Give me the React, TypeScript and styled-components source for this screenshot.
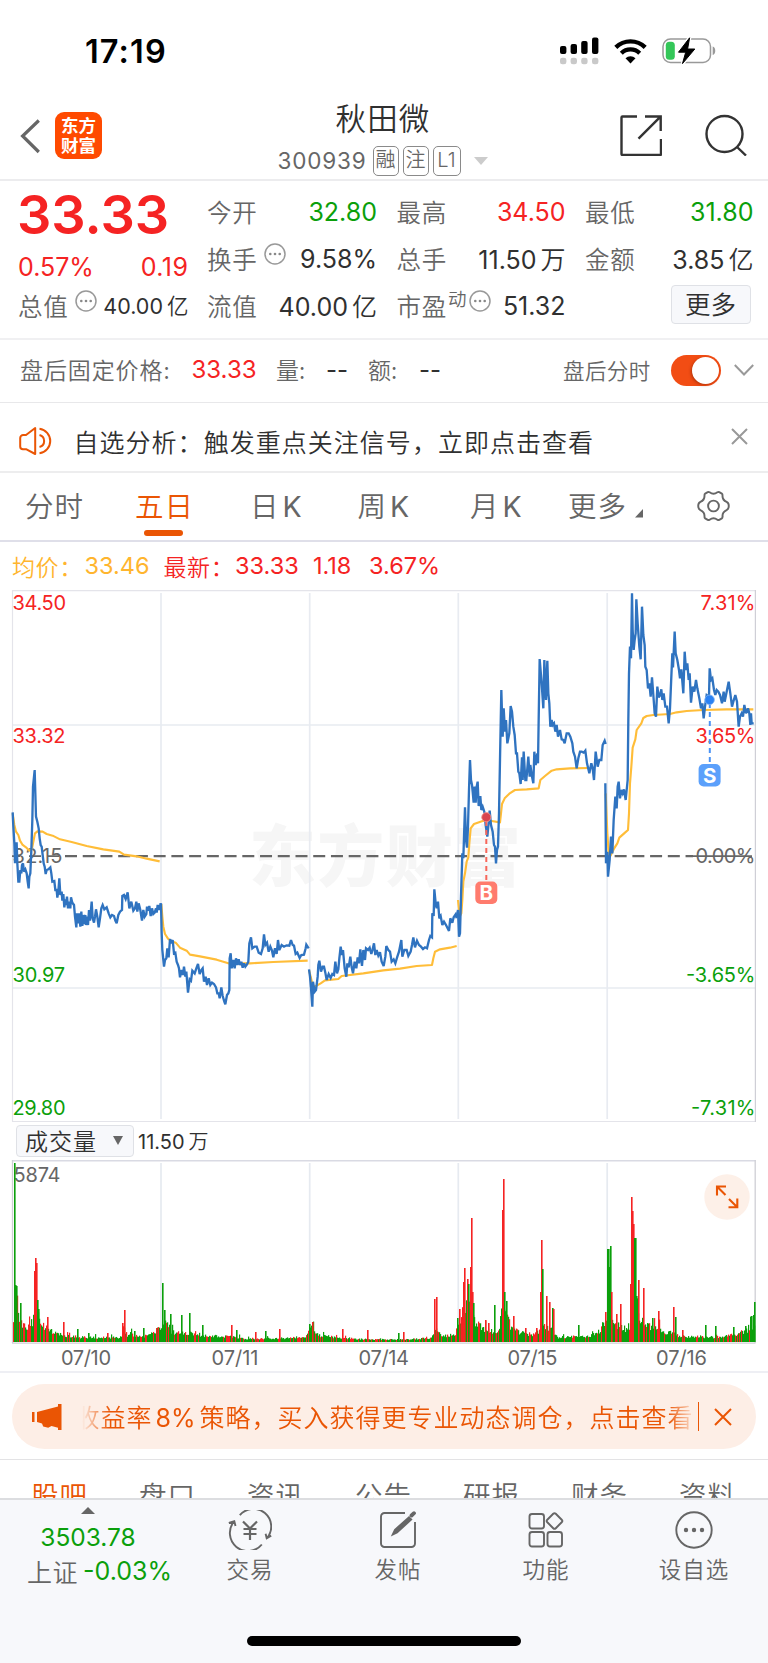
import React from "react";
import styled, { createGlobalStyle } from "styled-components";

const RED = "#f52323";
const GREEN = "#0b9f0b";
const ORANGE = "#ea5504";
const GREY = "#666";
const DARK = "#303030";

const GlobalStyle = createGlobalStyle`
  * { box-sizing: border-box; }
  body {
    margin: 0;
    background: #fff;
    font-family: Inter, "Noto Sans CJK SC", sans-serif;
    font-weight: 400;
    color: ${DARK};
  }
  svg { display: block; flex: none; }
`;

const Page = styled.div`
  width: 768px;
  height: 1663px;
  overflow: hidden;
  display: flex;
  flex-direction: column;
  background: #fff;
`;

const Txt = styled.span<{ $s: number; $c?: string; $ls?: number; $w?: number; $b?: number }>`
  font-size: ${(p) => p.$s}px;
  line-height: 1.2;
  color: ${(p) => p.$c ?? DARK};
  letter-spacing: ${(p) => p.$ls ?? 0}px;
  width: ${(p) => (p.$w ? `${p.$w}px` : "auto")};
  font-weight: ${(p) => p.$b ?? 400};
  white-space: nowrap;
  flex: none;
`;

/* CJK labels: lighter cut */
const Han = styled(Txt)`
  font-family: "Noto Sans CJK SC", sans-serif;
  font-weight: ${(p) => p.$b ?? 350};
`;

/* 万 / 亿 after a number */
const Unit = styled.span`
  font-family: "Noto Sans CJK SC", sans-serif;
  font-weight: 350;
  margin-left: 4px;
`;

/* Latin run inside CJK text */
const Latin = styled.span`
  font-family: Inter, sans-serif;
  font-weight: 400;
  letter-spacing: 0;
  margin: 0 4px 0 3px;
`;

const StatusBar = styled.header`
  height: 102px;
  flex: none;
  display: flex;
  align-items: center;
  justify-content: space-between;
  padding: 0 52px 0 85px;
`;
const StatusIcons = styled.div`
  display: flex;
  align-items: center;
  gap: 15px;
`;

const TitleBar = styled.div`
  height: 79px;
  flex: none;
  display: grid;
  grid-template-columns: 200px 1fr 202px;
  border-bottom: 2px solid #ececee;
`;
const TitleLeft = styled.div`
  display: flex;
  align-items: flex-start;
  padding: 10px 0 0 20px;
  gap: 15px;
`;
const Logo = styled.div`
  width: 47px;
  height: 47px;
  border-radius: 9px;
  background: #ff4a00;
  color: #fff;
  font: 700 17.5px/20px "Noto Sans CJK SC", sans-serif;
  display: flex;
  flex-direction: column;
  align-items: center;
  justify-content: center;
  padding-bottom: 1px;
`;
const TitleCenter = styled.div`
  display: flex;
  flex-direction: column;
  align-items: center;
`;
const TitleName = styled(Han)`
  margin-top: -3px;
`;
const CodeRow = styled.div`
  height: 30px;
  margin-top: 10px;
  display: flex;
  align-items: center;
`;
const Badge = styled.span<{ $w: number }>`
  width: ${(p) => p.$w}px;
  height: 30px;
  border: 1.5px solid #8a8a8a;
  border-radius: 5px;
  margin-right: 4px;
  color: ${GREY};
  font-size: 20px;
  font-weight: 350;
  line-height: 27px;
  text-align: center;
`;
const TitleRight = styled.div`
  display: flex;
  padding: 12px 0 0 54px;
  gap: 43px;
`;

const Quote = styled.section`
  height: 159px;
  flex: none;
  display: flex;
  padding: 0 14px 0 18px;
  border-bottom: 2px solid #f0f0f2;
`;
const QuoteMain = styled.div`
  width: 170.5px;
  margin-right: 18.5px;
`;
const BigPrice = styled(Txt)`
  margin-left: -1px;
`;
const QuoteGrid = styled.div`
  flex: 1;
  display: grid;
  grid-template-columns: 170px 169px 168.5px;
  grid-template-rows: 47px 47px 47px;
  column-gap: 19.5px;
  padding-top: 7px;
`;
const Spread = styled.div<{ $h?: number }>`
  display: flex;
  align-items: center;
  justify-content: space-between;
  height: ${(p) => (p.$h ? `${p.$h}px` : "auto")};
`;
const Lbl = styled.div`
  display: flex;
  align-items: center;
`;
const InfoWrap = styled.span<{ $gap: number }>`
  margin: -9px 0 0 ${(p) => p.$gap}px;
`;
const Sup = styled(Han)`
  margin: -15px 0 0 1px;
`;
const MoreButton = styled.button`
  width: 80px;
  height: 39px;
  margin: -2px 3px 0 auto;
  align-self: center;
  border: 1.5px solid #dfe1e6;
  border-radius: 4px;
  background: #f7f8fb;
  color: ${DARK};
  font: 350 25.5px/32px "Noto Sans CJK SC", sans-serif;
  padding: 0 0 3px;
`;

const AfterRow = styled.section`
  height: 63px;
  flex: none;
  display: flex;
  align-items: center;
  padding: 0 14px 2px 20px;
  border-bottom: 1.5px solid #e8e8ea;
`;
const Toggle = styled.span`
  width: 50px;
  height: 31px;
  border-radius: 16px;
  margin: 0 13px 0 auto;
  background: #f24d14;
  padding: 2px;
  display: flex;
  justify-content: flex-end;
  &::after {
    content: "";
    width: 27px;
    height: 27px;
    border-radius: 50%;
    background: #fff;
    box-shadow: -1px 1px 3px rgba(120, 30, 0, 0.5);
  }
`;

const Notice = styled.section`
  height: 70px;
  flex: none;
  display: flex;
  align-items: center;
  gap: 19.5px;
  padding: 8px 20px 0 19px;
  border-bottom: 2px solid #ededee;
`;
const CloseBox = styled.span`
  margin: -9px 0 0 auto;
`;

const Tabs = styled.nav`
  height: 69px;
  flex: none;
  display: flex;
  padding-left: 25px;
  border-bottom: 2px solid #dfdfe9;
`;
const Tab = styled.div<{ $w: number; $on?: boolean }>`
  width: ${(p) => p.$w}px;
  display: flex;
  flex-direction: column;
  padding-top: 12px;
  font: 350 28.5px/40px "Noto Sans CJK SC", sans-serif;
  letter-spacing: 1px;
  color: ${(p) => (p.$on ? ORANGE : GREY)};
  &::after {
    content: "";
    display: ${(p) => (p.$on ? "block" : "none")};
    width: 39px;
    height: 6px;
    border-radius: 3px;
    background: ${ORANGE};
    margin: 5px 0 0 9px;
  }
`;
const TabMore = styled.span`
  display: flex;
  align-items: flex-end;
  gap: 8px;
`;
const GearBox = styled.span`
  margin: 2px 0 0 1px;
`;

const AvgRow = styled.div`
  height: 48px;
  flex: none;
  display: flex;
  align-items: center;
  padding: 1px 0 0 12px;
`;

const VolumeHead = styled.div`
  height: 38px;
  flex: none;
  display: flex;
  align-items: center;
  padding: 0 0 0 16px;
  gap: 4px;
`;
const Selector = styled.button`
  width: 118px;
  height: 32px;
  padding: 0 10px 1px 8px;
  display: flex;
  align-items: center;
  justify-content: space-between;
  background: #f7f8fb;
  border: 1.5px solid #dfe1e6;
  border-radius: 4px;
`;

const BannerWrap = styled.section`
  height: 89px;
  flex: none;
  padding: 11px 12px 0;
  border-top: 2px solid #eeeff4;
  border-bottom: 1.5px solid #e3e3e5;
`;
const Banner = styled.div`
  height: 65px;
  border-radius: 33px;
  background: #fdeee6;
  display: flex;
  align-items: center;
  padding: 0 24px 0 20px;
`;
const Marquee = styled.div`
  width: 614px;
  margin-left: 20px;
  overflow: hidden;
  mask-image: linear-gradient(90deg, transparent 0, #000 28px, #000 586px, transparent 614px);
`;
const MarqueeText = styled(Han)`
  display: block;
  line-height: 38px;
  margin-left: -7.5px;
`;
const Bar = styled.span`
  width: 1.5px;
  height: 29px;
  background: ${ORANGE};
  margin: 0 15px 0 6px;
`;

const SubTabs = styled.div`
  height: 38px;
  flex: none;
  overflow: hidden;
  display: flex;
  padding: 18px 0 0 31px;
`;

const Dock = styled.footer`
  height: 165px;
  flex: none;
  border-top: 2px solid #dcdde0;
  background: #f7f8fb;
  display: flex;
  flex-direction: column;
  justify-content: space-between;
  align-items: center;
  padding-bottom: 17px;
`;
const DockRow = styled.div`
  width: 768px;
  display: flex;
`;
const IndexCell = styled.div`
  width: 176px;
  display: flex;
  flex-direction: column;
  align-items: center;
  padding-top: 7px;
`;
const DockCell = styled.div`
  width: 148px;
  display: flex;
  flex-direction: column;
  align-items: center;
  padding-top: 10px;
  gap: 5px;
`;
const IndexLine = styled.div`
  display: flex;
  align-items: center;
  margin: 4px 0 0 23px;
`;
const IndexValue = styled(Txt)`
  margin-top: 9px;
`;
const HomeBar = styled.div`
  width: 274px;
  height: 10px;
  border-radius: 5px;
  background: #000;
`;

const InfoDots = ({ gap = 6 }: { gap?: number }) => (
  <InfoWrap $gap={gap}>
    <svg width="22" height="22" viewBox="0 0 22 22" fill="none">
      <circle cx="11" cy="11" r="10" stroke="#999" strokeWidth="1.5" />
      <g fill="#888">
        <circle cx="6.3" cy="11" r="1.3" />
        <circle cx="11" cy="11" r="1.3" />
        <circle cx="15.7" cy="11" r="1.3" />
      </g>
    </svg>
  </InfoWrap>
);

const Cross = ({ size, color, sw }: { size: number; color: string; sw: number }) => (
  <svg width={size} height={size} viewBox={`0 0 ${size} ${size}`}>
    <path d={`M1 1L${size - 1} ${size - 1}M${size - 1} 1L1 ${size - 1}`} stroke={color} strokeWidth={sw} />
  </svg>
);

/* ---------- price chart ---------- */
/* Each trace is in thirds of a pixel, from its own segment's origin. */
const traces: { ox: number; price: string; avg: string }[] = [
  {
    ox: 0,
    avg: "38,700 43,735 48,755 55,765 60,782 68,795 78,802 88,812 96,806 101,780 105,760 112,754 128,755 140,762 158,767 180,778 215,786 260,798 310,808 358,815 372,824 410,829 440,836 479,844",
    price:
      "38,697 40,740 43,790 45,850 47,790 50,790 52,850 55,905 58,905 61,870 64,880 66,855 69,850 72,875 76,868 80,880 83,905 86,925 88,890 91,880 94,810 97,720 99,620 101,600 104,570 106,640 108,710 112,725 116,745 119,775 122,795 125,800 128,825 131,850 134,860 137,882 140,870 145,868 151,862 154,880 157,905 163,903 166,930 170,930 172,953 175,935 178,895 181,945 185,935 187,962 190,942 193,982 196,958 198,975 201,950 204,985 206,965 211,985 213,952 217,968 222,975 225,1010 229,1042 231,1000 235,1030 238,1000 241,1040 244,995 247,1038 250,1005 253,1032 256,1005 258,1035 261,1010 264,1035 267,990 270,1022 275,965 278,1015 282,1028 285,1010 288,988 292,1010 296,1042 300,1015 304,985 308,975 313,988 320,982 326,1000 331,1012 336,1005 342,1008 346,1022 350,1030 355,1005 360,995 366,990 367,948 372,945 377,957 383,937 388,985 394,965 400,992 405,985 409,965 412,995 416,970 421,990 426,1022 430,990 434,1010 439,1002 441,980 445,992 448,978 452,1008 456,985 460,1002 464,998 468,985 470,998 473,975 478,990 482,970",
  },
  {
    ox: 0,
    avg: "484,972 487,1010 490,1040 495,1062 504,1076 515,1084 527,1088 540,1103 560,1112 570,1124 600,1129 650,1139 685,1150 750,1150 820,1146 923,1142",
    price:
      "483,970 485,1060 487,1110 492,1160 495,1140 499,1135 502,1105 506,1132 510,1077 514,1090 518,1080 522,1120 526,1118 530,1145 534,1155 537,1165 540,1192 545,1170 549,1185 552,1160 556,1190 559,1175 564,1238 569,1198 573,1202 577,1172 584,1180 589,1165 594,1152 599,1182 604,1170 608,1165 612,1205 617,1190 621,1215 626,1195 631,1215 636,1208 642,1212 648,1222 652,1240 656,1240 659,1255 664,1222 668,1248 673,1265 676,1273 681,1245 685,1240 688,1230 689,1135 692,1120 695,1165 700,1140 704,1165 708,1135 712,1155 716,1138 720,1155 724,1145 728,1163 732,1150 736,1160 741,1153 745,1145 748,1090 753,1072 757,1105 764,1100 770,1100 776,1118 783,1122 788,1105 792,1063 796,1095 801,1088 806,1115 811,1100 816,1112 820,1132 825,1105 830,1122 834,1080 838,1110 845,1095 852,1100 860,1096 868,1097 873,1080 878,1095 882,1097 887,1122 892,1118 899,1134 904,1125 912,1124 917,1105 919,1094 926,1105",
  },
  {
    ox: 300,
    avg: "27,1170 32,1190 39,1220 50,1217 62,1210 75,1201 115,1197 125,1188 190,1180 250,1171 300,1166 350,1158 396,1155 400,1135 405,1115 420,1108 450,1103 470,1098",
    price:
      "27,1168 30,1190 33,1225 37,1280 39,1205 44,1235 48,1230 53,1190 55,1155 58,1142 63,1175 68,1160 72,1160 76,1178 80,1200 86,1182 92,1194 97,1182 102,1185 106,1145 111,1180 115,1168 118,1135 122,1100 126,1125 129,1110 134,1165 139,1190 142,1150 146,1162 151,1130 155,1162 159,1180 164,1145 169,1165 173,1132 177,1150 181,1108 186,1158 190,1110 195,1140 198,1105 204,1110 209,1103 214,1122 218,1108 222,1090 226,1125 230,1110 235,1127 240,1117 245,1145 251,1158 256,1130 259,1098 265,1110 270,1115 275,1145 281,1138 286,1150 292,1130 297,1115 304,1080 307,1130 313,1110 320,1110 325,1128 332,1115 336,1095 340,1072 345,1102 351,1082 357,1095 363,1100 369,1107 375,1102 381,1105 387,1080 391,1068 396,1072 397,1000 401,1008 403,928 407,970 410,985 414,965 418,1015 422,1008 427,1035 432,1025 438,1035 447,1053 451,1015 457,1028 461,1012 467,1003 470,1015",
  },
  {
    ox: 300,
    avg: "474,960 479,1010 484,1000 487,960 490,905 495,880 500,845 505,832 508,790 512,745 522,732 550,722 575,723 600,727 603,700 606,672 614,655 628,641 645,630 680,628 716,625 721,600 735,588 755,572 770,568 810,565 868,564",
    price:
      "470,1012 474,990 477,1070 480,1060 483,950 487,820 490,835 493,740 495,682 498,780 501,803 504,740 507,630 510,540 513,600 516,615 518,635 521,668 524,620 527,668 530,620 533,605 536,678 541,648 544,690 548,680 553,695 557,735 562,770 567,715 569,692 573,735 578,755 582,795 585,800 588,850 591,810 594,800 597,700 600,540 604,330 608,470 611,385 615,455 618,420 622,490 628,460 632,378 636,395 640,440 644,465 648,520 651,520 655,575 658,580 662,612 666,532 668,600 671,515 676,600 679,600 685,530 689,590 691,555 696,590 700,610 703,515 707,555 712,520 714,550 716,420 719,237 725,310 730,385 733,240 738,360 742,242 745,340 748,370 751,440 755,420 758,435 762,430 766,455 770,435 774,470 780,450 785,478 790,480 794,490 800,460 806,460 811,470 817,490 820,515 825,530 830,565 835,535 840,515 845,515 851,518 856,512 861,550 868,580 874,550 878,565 882,600 887,515 893,560 898,540 904,540 908,495 914,482 917,492",
  },
  {
    ox: 520,
    avg: "257,640 262,760 266,820 271,828 282,806 292,790 298,773 315,758 324,750 327,700 330,610 334,560 338,503 346,478 350,450 364,430 370,414 380,408 400,405 450,402 470,397 500,393 550,390 620,388 700,388",
    price:
      "256,610 258,850 262,815 264,890 269,840 273,770 277,820 281,720 286,650 290,685 293,620 296,605 300,655 304,630 308,640 312,628 317,660 320,630 323,600 325,420 327,280 330,200 333,235 336,40 338,150 341,210 344,180 347,160 349,58 353,130 358,200 362,238 366,80 370,165 374,195 376,260 380,270 384,325 388,310 392,350 396,292 400,345 404,400 408,410 412,320 416,352 420,345 424,328 427,360 431,340 436,380 441,380 446,430 450,385 454,290 457,220 459,262 464,155 467,220 472,240 477,270 480,295 484,268 490,340 494,215 498,270 502,250 506,300 509,280 513,368 518,320 523,335 528,300 532,325 538,355 543,385 547,370 551,415 555,380 560,345 567,350 569,265 573,300 577,295 582,330 586,345 590,330 595,335 600,345 606,370 611,335 614,365 620,335 626,305 631,340 636,380 640,365 646,345 651,365 656,440 660,410 665,400 669,410 673,375 678,400 684,385 688,400 691,435 693,400 695,430 701,430",
  },
];

const AxisText = ({ x, y, w, fill, end, children }: { x: number; y: number; w: number; fill: string; end?: boolean; children: string }) => (
  <text x={end ? x - w : x} y={y} fontSize="20" fill={fill} textLength={w} fontFamily="Inter, sans-serif">
    {children}
  </text>
);

const PriceChart = () => (
  <svg width="768" height="532" viewBox="0 590 768 532" fill="none">
    <text x="249" y="881" fontSize="67" fontWeight="900" fill="#f6f6f6" textLength="272" fontFamily="'Noto Sans CJK SC', sans-serif">
      东方财富
    </text>
    <g stroke="#e8ebf1" strokeWidth="1.7">
      <path d="M161 593V1119M309.7 593V1119M458.3 593V1119M607.2 593V1119" />
      <path d="M13 725H755M13 988H755" />
    </g>
    <path d="M12 590.7H755.5M12.5 590V1121.5M12 1121.5H755.5" stroke="#e4e4ea" strokeWidth="1.2" />
    <path d="M755.4 590V1122" stroke="#cfcfd6" strokeWidth="1.2" />
    <AxisText x={12.5} y={863} w={50} fill={GREY}>32.15</AxisText>
    <AxisText x={755.5} y={863} w={60} fill={GREY} end>0.00%</AxisText>
    <path d="M12 856.2H20M29 856.2H41M47 856.2H59M693 856.2H752" stroke="#666" strokeWidth="1.8" />
    <path d="M65 856.2H693" stroke="#666" strokeWidth="2.3" strokeDasharray="12 5.73" />
    {traces.map((t, i) => (
      <g key={i} transform={`translate(${t.ox} 580) scale(0.33333)`} strokeLinejoin="round">
        <polyline points={t.avg} stroke="#ffbd38" strokeWidth="6.4" />
        <polyline points={t.price} stroke="#2f73c0" strokeWidth="7" strokeLinejoin="miter" strokeMiterlimit="3" />
      </g>
    ))}
    <AxisText x={12.5} y={610} w={53.5} fill={RED}>34.50</AxisText>
    <AxisText x={12.5} y={743} w={53} fill={RED}>33.32</AxisText>
    <AxisText x={12.5} y={982} w={52.5} fill={GREEN}>30.97</AxisText>
    <AxisText x={12.5} y={1114.7} w={53} fill={GREEN}>29.80</AxisText>
    <AxisText x={755.5} y={610} w={55} fill={RED} end>7.31%</AxisText>
    <AxisText x={755.5} y={743} w={60} fill={RED} end>3.65%</AxisText>
    <AxisText x={755.5} y={982} w={69.5} fill={GREEN} end>-3.65%</AxisText>
    <AxisText x={755.5} y={1114.7} w={64.5} fill={GREEN} end>-7.31%</AxisText>
    <path d="M486.3 821V882" stroke="#f7665a" strokeWidth="2" strokeDasharray="5 4" />
    <circle cx="486.3" cy="817.2" r="4.6" fill="#d94550" stroke="#f49a90" strokeWidth="0.8" />
    <rect x="475.3" y="881.5" width="22" height="22.5" rx="5" fill="#ff7b6d" />
    <text x="486.3" y="900" fontSize="20.5" fontWeight="700" fill="#fff" textAnchor="middle" fontFamily="Inter, sans-serif">B</text>
    <path d="M709.8 703V765" stroke="#4a93f5" strokeWidth="2" strokeDasharray="5 4" />
    <circle cx="709.6" cy="699.8" r="4.8" fill="#2b82f3" stroke="#86b7f6" strokeWidth="0.8" />
    <rect x="698.6" y="764" width="22" height="22.5" rx="5" fill="#5ba0fb" />
    <text x="709.7" y="782.5" fontSize="20.5" fontWeight="700" fill="#fff" textAnchor="middle" fontFamily="Inter, sans-serif">S</text>
  </svg>
);

/* ---------- volume chart ---------- */
/* Typical bar height by x position. */
const envelope: [number, number][] = [
  [13, 26], [17, 30], [23, 18], [29, 17], [34, 26], [38, 32], [42, 13], [55, 11], [62, 7], [80, 5], [110, 4.5], [121, 5], [124, 14], [127, 7],
  [131, 9], [135, 5], [150, 7], [161, 15], [167, 20], [171, 10], [190, 10], [200, 6], [225, 6], [245, 3.5], [290, 4], [305, 6], [311, 15], [318, 7],
  [335, 5], [360, 3], [400, 2.5], [430, 4], [437, 13], [442, 6], [455, 8], [463, 36], [470, 34], [475, 20], [485, 12], [498, 10], [501, 36], [505, 32],
  [510, 17], [520, 9], [538, 8], [542, 18], [552, 12], [558, 5], [590, 6], [602, 14], [607, 30], [612, 22], [620, 15], [630, 11], [632, 47], [636, 48],
  [640, 22], [655, 14], [668, 10], [674, 9], [678, 6], [720, 5], [735, 8], [748, 12], [755, 20],
];
const spikes: [number, number, "r" | "g"][] = [
  [14, 179, "g"], [15, 57, "g"], [16, 56, "g"], [20, 39, "g"], [34, 71, "r"], [35, 84, "r"], [36, 79, "r"], [37, 42, "g"], [38, 33, "g"], [47, 25, "r"],
  [63, 20, "r"], [77, 13, "g"], [88, 9, "g"], [107, 9, "r"], [122, 19, "r"], [124, 32, "r"], [134, 11, "g"], [143, 14, "g"], [156, 14, "r"], [162, 59, "g"],
  [164, 32, "g"], [170, 28, "g"], [181, 27, "g"], [189, 29, "g"], [202, 17, "g"], [231, 17, "r"], [236, 12, "g"], [255, 10, "r"], [265, 11, "g"],
  [279, 13, "r"], [309, 18, "g"], [312, 20, "r"], [342, 13, "r"], [367, 12, "r"], [398, 9, "g"], [403, 10, "r"], [434, 43, "r"], [436, 45, "r"],
  [457, 24, "g"], [459, 33, "r"], [463, 60, "r"], [464, 74, "r"], [467, 63, "r"], [468, 58, "g"], [470, 75, "r"], [471, 124, "r"], [472, 50, "r"],
  [473, 39, "g"], [485, 22, "r"], [488, 19, "r"], [494, 37, "g"], [502, 132, "r"], [503, 163, "r"], [504, 50, "g"], [506, 41, "g"], [513, 26, "r"],
  [525, 14, "r"], [536, 14, "r"], [540, 50, "r"], [541, 102, "r"], [542, 73, "g"], [546, 46, "r"], [549, 40, "r"], [552, 34, "g"], [553, 33, "r"],
  [578, 17, "g"], [605, 30, "r"], [607, 93, "g"], [608, 93, "g"], [609, 75, "g"], [610, 96, "g"], [611, 50, "r"], [616, 28, "r"], [620, 38, "r"],
  [630, 58, "r"], [631, 145, "r"], [632, 131, "r"], [633, 118, "r"], [634, 104, "g"], [635, 104, "g"], [636, 46, "g"], [638, 62, "r"], [643, 54, "r"],
  [652, 24, "g"], [658, 31, "r"], [673, 35, "r"], [675, 25, "g"], [682, 12, "r"], [705, 17, "g"], [715, 16, "g"], [733, 15, "g"], [745, 16, "g"],
  [751, 26, "g"], [753, 27, "g"], [754, 40, "g"],
];

const bars = (() => {
  const out: { x: number; h: number; red: boolean }[] = [];
  let seed = 77;
  const rnd = () => {
    seed = (seed * 16807) % 2147483647;
    return seed / 2147483647;
  };
  let k = 0;
  for (let x = 13; x < 755; x++) {
    while (k < envelope.length - 2 && envelope[k + 1][0] <= x) k++;
    const [x0, h0] = envelope[k];
    const [x1, h1] = envelope[k + 1];
    const base = h0 + ((h1 - h0) * (x - x0)) / (x1 - x0);
    const burst = rnd() > 0.93 ? 1.5 : 1;
    out.push({ x, h: Math.max(1.5, base * (0.7 + rnd() * 0.5) * burst), red: rnd() < 0.28 });
  }
  return out;
})();

const VolumeChart = () => (
  <svg width="768" height="211" viewBox="0 1160 768 211" fill="none" fontFamily="Inter, sans-serif">
    <path d="M161 1163V1342M309.7 1163V1342M458.3 1163V1342M607.2 1163V1342" stroke="#e6eaf0" strokeWidth="1.7" />
    <path d="M12 1160.5H755.5" stroke="#d9dae3" strokeWidth="1.8" />
    <path d="M12.5 1160V1343M12 1343.2H755.5M755.2 1160V1343" stroke="#cfcfd5" strokeWidth="1.3" />
    <AxisText x={13.5} y={1182} w={47} fill={GREY}>5874</AxisText>
    <g>
      {bars.map((b) => (
        <rect key={b.x} x={b.x} y={1342 - b.h} width="1.2" height={b.h} fill={b.red ? RED : GREEN} />
      ))}
      {spikes.map(([x, h, c]) => (
        <rect key={`s${x}`} x={x} y={1342 - h} width="1.6" height={h} fill={c === "r" ? RED : GREEN} />
      ))}
    </g>
    <circle cx="727" cy="1197" r="22.7" fill="#fdf0e8" />
    <path d="M717 1195.5V1186.5H726M717.5 1187L725.5 1195M729 1199L737 1207M728.5 1207.3H737.3V1198.5" stroke={ORANGE} strokeWidth="2.1" />
    <AxisText x={61} y={1365} w={50} fill={GREY}>07/10</AxisText>
    <AxisText x={211.5} y={1365} w={47} fill={GREY}>07/11</AxisText>
    <AxisText x={358.5} y={1365} w={50.5} fill={GREY}>07/14</AxisText>
    <AxisText x={507.5} y={1365} w={50} fill={GREY}>07/15</AxisText>
    <AxisText x={656} y={1365} w={51} fill={GREY}>07/16</AxisText>
  </svg>
);

const subTabs = ["股吧", "盘口", "资讯", "公告", "研报", "财务", "资料"];

const QLabel = ({ children }: { children: string }) => (
  <Han $s={24.5} $c={GREY} $ls={0.8}>{children}</Han>
);

export default function App() {
  return (
    <Page>
      <GlobalStyle />
      <StatusBar>
        <Txt $s={32.5} $b={600} $c="#000" $ls={1.1}>17:19</Txt>
        <StatusIcons>
          <svg width="39" height="28" viewBox="0 0 39 28">
            <g fill="#000">
              <rect x="0" y="9" width="6.4" height="8" rx="2" />
              <rect x="10.6" y="7" width="6.4" height="10" rx="2" />
              <rect x="21.2" y="4" width="6.4" height="13" rx="2" />
              <rect x="32" y="0.5" width="6.4" height="16.5" rx="2" />
            </g>
            <g fill="#c9c9c9">
              <rect x="0" y="20.7" width="6.4" height="6.6" rx="2.4" />
              <rect x="10.6" y="20.7" width="6.4" height="6.6" rx="2.4" />
              <rect x="21.2" y="20.7" width="6.4" height="6.6" rx="2.4" />
              <rect x="32" y="20.7" width="6.4" height="6.6" rx="2.4" />
            </g>
          </svg>
          <svg width="33" height="25" viewBox="0 0 33 25" fill="none">
            <path d="M1.8 8.4a21 21 0 0 1 29.4 0" stroke="#000" strokeWidth="4.3" />
            <path d="M7.3 14.2a13 13 0 0 1 18.4 0" stroke="#000" strokeWidth="4.2" />
            <path d="M16.5 24.5l-5-5.2a7.4 7.4 0 0 1 10 0z" fill="#000" />
          </svg>
          <svg width="54" height="28" viewBox="0 0 54 28" fill="none">
            <rect x="1" y="2" width="47.5" height="23.5" rx="7.5" stroke="#999" strokeWidth="1.5" />
            <path d="M50.7 9.5c3.4 1 3.4 7.5 0 8.5z" fill="#999" />
            <rect x="3.8" y="4.7" width="9" height="18" rx="3.5" fill="#34c759" />
            <path d="M27.6.8 16.5 15.2h7.2L20.5 26.6 32.8 12h-7.2z" fill="#000" stroke="#fff" strokeWidth="3.5" />
            <path d="M27.6.8 16.5 15.2h7.2L20.5 26.6 32.8 12h-7.2z" fill="#000" stroke="#000" strokeWidth="1" strokeLinejoin="round" />
          </svg>
        </StatusIcons>
      </StatusBar>

      <TitleBar>
        <TitleLeft>
          <svg width="20" height="47" viewBox="20 112 20 47" fill="none">
            <path d="M38.8 120.5 22.6 136 38.8 152" stroke="#666" strokeWidth="3.2" />
          </svg>
          <Logo>
            <span>东方</span>
            <span>财富</span>
          </Logo>
        </TitleLeft>
        <TitleCenter>
          <TitleName $s={30.5} $ls={1.2}>秋田微</TitleName>
          <CodeRow>
            <Txt $s={22.5} $c={GREY} $ls={0.8} $w={95}>300939</Txt>
            <Badge $w={26}>融</Badge>
            <Badge $w={26}>注</Badge>
            <Badge $w={28}>L1</Badge>
            <svg width="24" height="8" viewBox="-9 0 24 8"><path d="M0 0h14L7 8z" fill="#ccc" /></svg>
          </CodeRow>
        </TitleCenter>
        <TitleRight>
          <svg width="42" height="42" viewBox="620 114 42 42" fill="none" stroke="#333" strokeWidth="2.4">
            <path d="M637 116.5h-14.5a1 1 0 0 0-1 1V154a1 1 0 0 0 1 1h37.5a1 1 0 0 0 1-1v-15M645 116.5h15.7V131M660.5 116.7l-22 22" />
          </svg>
          <svg width="42" height="42" viewBox="704 114 42 42" fill="none" stroke="#333" strokeWidth="2.4">
            <circle cx="723.5" cy="134" r="18" />
            <path d="M736 147l9 8.5" />
          </svg>
        </TitleRight>
      </TitleBar>

      <Quote>
        <QuoteMain>
          <Spread $h={68}><BigPrice $s={54} $b={600} $c={RED}>33.33</BigPrice></Spread>
          <Spread $h={35}>
            <Txt $s={25} $c={RED}>0.57%</Txt>
            <Txt $s={25} $c={RED} $ls={0.5}>0.19</Txt>
          </Spread>
          <Spread $h={43}>
            <Lbl><QLabel>总值</QLabel><InfoDots /></Lbl>
            <Txt $s={21.5}>40.00<Unit>亿</Unit></Txt>
          </Spread>
        </QuoteMain>
        <QuoteGrid>
          <Spread><QLabel>今开</QLabel><Txt $s={25} $c={GREEN}>32.80</Txt></Spread>
          <Spread><QLabel>最高</QLabel><Txt $s={25} $c={RED}>34.50</Txt></Spread>
          <Spread><QLabel>最低</QLabel><Txt $s={25} $c={GREEN}>31.80</Txt></Spread>
          <Spread><Lbl><QLabel>换手</QLabel><InfoDots /></Lbl><Txt $s={25}>9.58%</Txt></Spread>
          <Spread><QLabel>总手</QLabel><Txt $s={25}>11.50<Unit>万</Unit></Txt></Spread>
          <Spread><QLabel>金额</QLabel><Txt $s={25}>3.85<Unit>亿</Unit></Txt></Spread>
          <Spread><QLabel>流值</QLabel><Txt $s={25}>40.00<Unit>亿</Unit></Txt></Spread>
          <Spread>
            <Lbl><QLabel>市盈</QLabel><Sup $s={18.5} $c={GREY}>动</Sup><InfoDots gap={2} /></Lbl>
            <Txt $s={25}>51.32</Txt>
          </Spread>
          <MoreButton>更多</MoreButton>
        </QuoteGrid>
      </Quote>

      <AfterRow>
        <Han $s={23} $c={GREY} $ls={0.9} $w={171.5}>盘后固定价格:</Han>
        <Txt $s={24} $c={RED} $w={84.5}>33.33</Txt>
        <Han $s={23} $c={GREY} $w={50}>量:</Han>
        <Txt $s={24} $w={42}>--</Txt>
        <Han $s={23} $c={GREY} $w={51}>额:</Han>
        <Txt $s={24} $w={144}>--</Txt>
        <Han $s={21.5} $c={GREY} $ls={0.4}>盘后分时</Han>
        <Toggle />
        <svg width="20" height="12" viewBox="0 0 20 12" fill="none"><path d="M.8 1 10 10.5 19.2 1" stroke="#999" strokeWidth="2" /></svg>
      </AfterRow>

      <Notice>
        <svg width="35" height="30" viewBox="0 0 35 30" fill="none" stroke={ORANGE} strokeWidth="2">
          <path d="M16.2 2v26L7.5 23.3H4A2.8 2.8 0 0 1 1.2 20.5v-8.5A3 3 0 0 1 4.2 9H7z" strokeLinejoin="round" />
          <path d="M20.5 2.8a12.3 12.3 0 0 1 0 24.4M20.5 9a6.2 6.2 0 0 1 0 12" />
        </svg>
        <Han $s={25} $ls={1.03}>自选分析：触发重点关注信号，立即点击查看</Han>
        <CloseBox><Cross size={17} color="#999" sw={2} /></CloseBox>
      </Notice>

      <Tabs>
        <Tab $w={110}>分时</Tab>
        <Tab $w={115} $on>五日</Tab>
        <Tab $w={107.5}><span>日<Latin>K</Latin></span></Tab>
        <Tab $w={112.5}><span>周<Latin>K</Latin></span></Tab>
        <Tab $w={98}><span>月<Latin>K</Latin></span></Tab>
        <Tab $w={128}>
          <TabMore>
            更多
            <svg width="8" height="16" viewBox="0 0 8 16"><path d="M8 0v8.5H0z" fill="#666" /></svg>
          </TabMore>
        </Tab>
        <Tab $w={34}>
          <GearBox>
            <svg width="33" height="36" viewBox="0 0 33 36" fill="none" stroke="#666" strokeWidth="1.9">
              <path d="M12.6 5.3Q16.5 8.2 20.4 5.3Q21.3 4.7 22.3 5.1L24.8 6.6Q25.6 7.2 25.5 8.3Q25.2 13 29.6 14.9Q31.8 15.9 31.8 19Q31.8 22.1 29.6 23.1Q25.2 25 25.5 29.7Q25.6 30.8 24.8 31.4L22.3 32.9Q21.3 33.3 20.4 32.7Q16.5 29.8 12.6 32.7Q11.7 33.3 10.7 32.9L8.2 31.4Q7.4 30.8 7.5 29.7Q7.8 25 3.4 23.1Q1.2 22.1 1.2 19Q1.2 15.9 3.4 14.9Q7.8 13 7.5 8.3Q7.4 7.2 8.2 6.6L10.7 5.1Q11.7 4.7 12.6 5.3Z" />
              <circle cx="16.5" cy="19" r="5.4" />
            </svg>
          </GearBox>
        </Tab>
      </Tabs>

      <AvgRow>
        <Han $s={23} $c="#ffb52e" $ls={0.6} $w={72.5}>均价：</Han>
        <Txt $s={23.5} $c="#ffb52e" $w={79}>33.46</Txt>
        <Han $s={23} $c={RED} $ls={0.6} $w={71.5}>最新：</Han>
        <Txt $s={23.5} $c={RED} $w={78}>33.33</Txt>
        <Txt $s={23.5} $c={RED} $w={56}>1.18</Txt>
        <Txt $s={23.5} $c={RED}>3.67%</Txt>
      </AvgRow>

      <PriceChart />

      <VolumeHead>
        <Selector>
          <Han $s={23} $ls={1}>成交量</Han>
          <svg width="10" height="9" viewBox="0 0 10 9"><path d="M0 0h10L5 9z" fill="#666" /></svg>
        </Selector>
        <Txt $s={20}>11.50<Unit>万</Unit></Txt>
      </VolumeHead>
      <VolumeChart />

      <BannerWrap>
        <Banner>
          <svg width="30" height="26" viewBox="0 0 30 26" fill={ORANGE}>
            <path d="M0 8h2.5v10H0zM5 8 26 2.5V0h3.5v26H26v-2.2L19.5 22l-3.3 1.7-5-1.3L10 19.5 5 18z" />
          </svg>
          <Marquee>
            <MarqueeText $s={25} $ls={1} $c={ORANGE}>收益率<Latin>8%</Latin>策略，买入获得更专业动态调仓，点击查看</MarqueeText>
          </Marquee>
          <Bar />
          <Cross size={18} color={ORANGE} sw={2} />
        </Banner>
      </BannerWrap>

      <SubTabs>
        {subTabs.map((t, i) => (
          <Han key={t} $s={27.5} $ls={1} $w={108} $c={i === 0 ? ORANGE : GREY}>{t}</Han>
        ))}
      </SubTabs>

      <Dock>
        <DockRow>
          <IndexCell>
            <svg width="14" height="7" viewBox="0 0 14 7"><path d="M0 7h14L7 0z" fill="#666" /></svg>
            <IndexValue $s={24.5} $c={GREEN}>3503.78</IndexValue>
            <IndexLine>
              <Han $s={25} $c={GREY} $ls={0.5} $w={56}>上证</Han>
              <Txt $s={25} $c={GREEN}>-0.03%</Txt>
            </IndexLine>
          </IndexCell>
          <DockCell>
            <svg width="44" height="40" viewBox="0 0 44 40" fill="none" stroke="#666" strokeWidth="1.9">
              <path d="M11.8 5.2A17.8 17.8 0 0 1 39 28.200M33.800 34.500A17.800 17.800 0 0 1 6 11.500M.8 13 6.300 11.300 7.500 16M43.200 25.600 38.700 28.300 37.600 23.800" />
              <path d="M15 11.5 22 18.5 29 11.5M22 18.5V30M15.500 19H28.500M15.500 24H28.500" strokeWidth="2.200" />
            </svg>
            <Han $s={22.5} $ls={1} $c={GREY}>交易</Han>
          </DockCell>
          <DockCell>
            <svg width="36" height="40" viewBox="0 0 36 40" fill="none" stroke="#666" strokeWidth="1.9">
              <path d="M25 3H4.5A3.5 3.5 0 0 0 1 6.5v27A3.5 3.5 0 0 0 4.5 37h27A3.5 3.5 0 0 0 35 33.5V12" />
              <path d="M12.8 24.5 15 19.8 29 7.2 31.2 9.5 17 22.5z" fill="#666" />
              <path d="M31.5 5.5 34 3.2" strokeWidth="3.8" strokeLinecap="round" />
            </svg>
            <Han $s={22.5} $ls={1} $c={GREY}>发帖</Han>
          </DockCell>
          <DockCell>
            <svg width="36" height="40" viewBox="0 0 36 40" fill="none" stroke="#666" strokeWidth="1.9">
              <rect x="1.5" y="4" width="14.5" height="14.5" rx="2.5" />
              <rect x="1.5" y="22" width="14.5" height="14.5" rx="2.5" />
              <rect x="19.5" y="22" width="14.5" height="14.5" rx="2.5" />
              <rect x="20.5" y="5" width="12" height="12" rx="1.8" transform="rotate(45 26.5 11)" />
            </svg>
            <Han $s={22.5} $ls={1} $c={GREY}>功能</Han>
          </DockCell>
          <DockCell>
            <svg width="38" height="40" viewBox="0 0 38 40" fill="none">
              <circle cx="19" cy="20" r="17.7" stroke="#666" strokeWidth="1.9" />
              <g fill="#666">
                <circle cx="11" cy="20" r="2.2" />
                <circle cx="19" cy="20" r="2.2" />
                <circle cx="27" cy="20" r="2.2" />
              </g>
            </svg>
            <Han $s={22.5} $ls={1} $c={GREY}>设自选</Han>
          </DockCell>
        </DockRow>
        <HomeBar />
      </Dock>
    </Page>
  );
}
